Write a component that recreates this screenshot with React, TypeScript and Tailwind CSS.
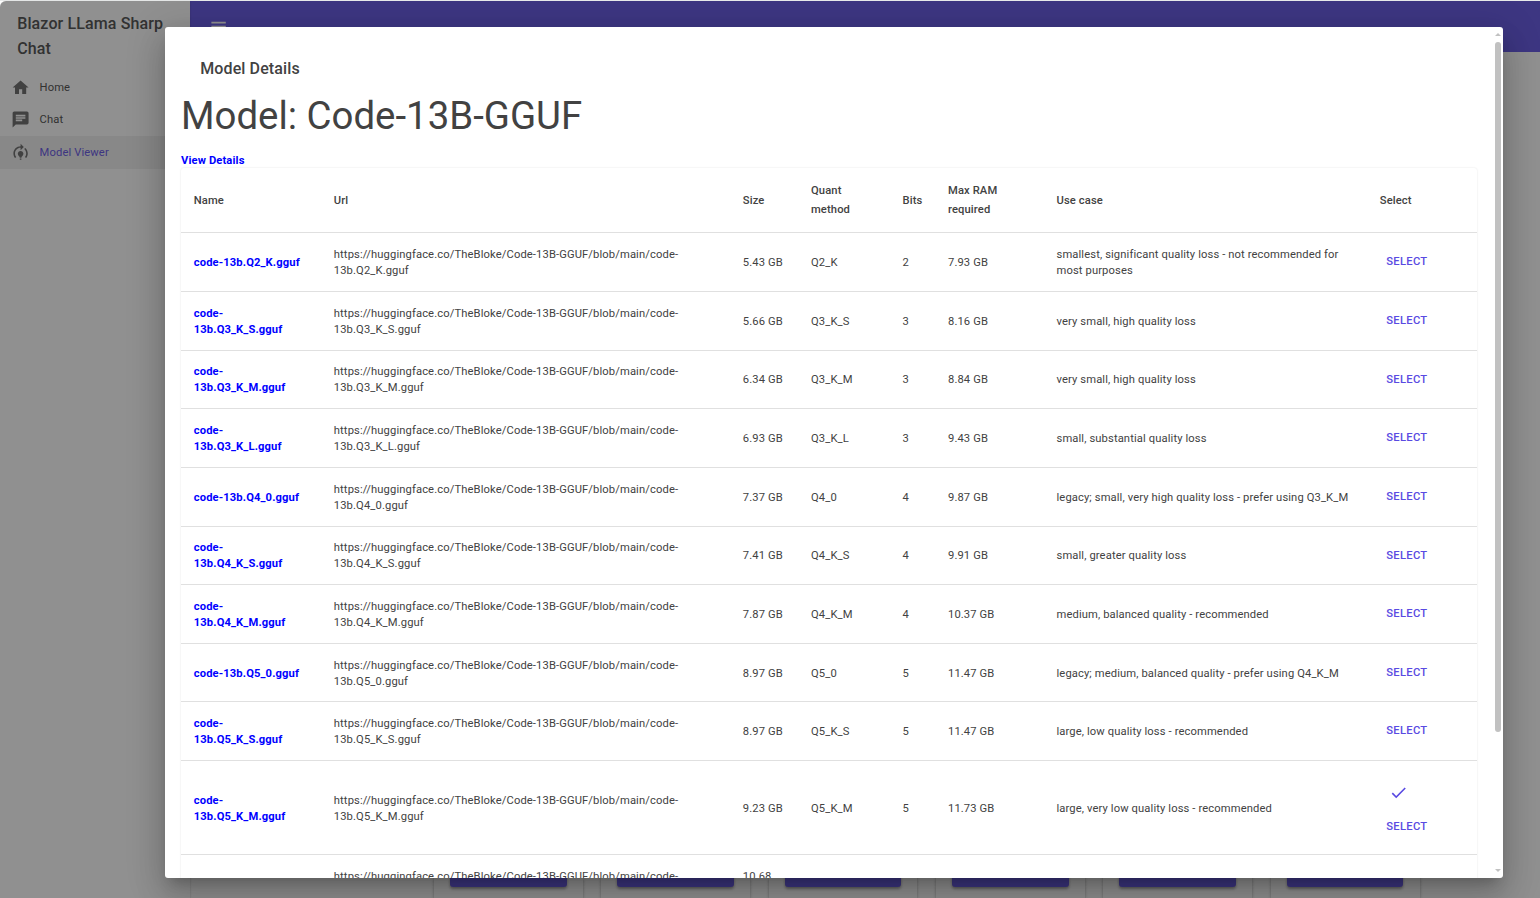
import React from "react";

type Model = {
  file: string;
  size: string;
  quant: string;
  bits: number;
  ram: string;
  useCase: string;
  selected?: boolean;
};

const models: Model[] = [
  { file: "Q2_K", size: "5.43 GB", quant: "Q2_K", bits: 2, ram: "7.93 GB", useCase: "smallest, significant quality loss - not recommended for most purposes" },
  { file: "Q3_K_S", size: "5.66 GB", quant: "Q3_K_S", bits: 3, ram: "8.16 GB", useCase: "very small, high quality loss" },
  { file: "Q3_K_M", size: "6.34 GB", quant: "Q3_K_M", bits: 3, ram: "8.84 GB", useCase: "very small, high quality loss" },
  { file: "Q3_K_L", size: "6.93 GB", quant: "Q3_K_L", bits: 3, ram: "9.43 GB", useCase: "small, substantial quality loss" },
  { file: "Q4_0", size: "7.37 GB", quant: "Q4_0", bits: 4, ram: "9.87 GB", useCase: "legacy; small, very high quality loss - prefer using Q3_K_M" },
  { file: "Q4_K_S", size: "7.41 GB", quant: "Q4_K_S", bits: 4, ram: "9.91 GB", useCase: "small, greater quality loss" },
  { file: "Q4_K_M", size: "7.87 GB", quant: "Q4_K_M", bits: 4, ram: "10.37 GB", useCase: "medium, balanced quality - recommended" },
  { file: "Q5_0", size: "8.97 GB", quant: "Q5_0", bits: 5, ram: "11.47 GB", useCase: "legacy; medium, balanced quality - prefer using Q4_K_M" },
  { file: "Q5_K_S", size: "8.97 GB", quant: "Q5_K_S", bits: 5, ram: "11.47 GB", useCase: "large, low quality loss - recommended" },
  { file: "Q5_K_M", size: "9.23 GB", quant: "Q5_K_M", bits: 5, ram: "11.73 GB", useCase: "large, very low quality loss - recommended", selected: true },
  { file: "Q6_K", size: "10.68 GB", quant: "Q6_K", bits: 6, ram: "13.18 GB", useCase: "very large, extremely low quality loss" },
];

const columns =
  "grid grid-cols-[140px_409px_68.2px_91.5px_45.5px_108.5px_323.3px_1fr] items-center border-b border-[#e0e0e0]";

function Icon({ d, className }: { d: string; className: string }) {
  return (
    <svg viewBox="0 0 24 24" className={className} fill="currentColor">
      <path d={d} />
    </svg>
  );
}

const icons = {
  home: "M10 20v-6h4v6h5v-8h3L12 3 2 12h3v8z",
  chat: "M20 2H4c-1.1 0-1.99.9-1.99 2L2 22l4-4h14c1.1 0 2-.9 2-2V4c0-1.1-.9-2-2-2zM6 9h12v2H6V9zm8 5H6v-2h8v2zm4-6H6V6h12v2z",
  training:
    "M15.5 13.5c0 2-2.5 3.5-2.5 5h-2c0-1.5-2.5-3-2.5-5 0-1.93 1.57-3.5 3.5-3.5s3.5 1.57 3.5 3.5zm-2.5 6h-2V21h2v-1.5zm6-6.5c0 1.68-.59 3.21-1.58 4.42l1.42 1.42C20.18 17.27 21 15.23 21 13c0-2.74-1.23-5.19-3.16-6.84l-1.42 1.42C17.99 8.86 19 10.82 19 13zm-3-8l-4-4v3c-4.97 0-9 4.03-9 9 0 2.23.82 4.27 2.16 5.84l1.42-1.42C5.59 16.21 5 14.68 5 13c0-3.86 3.14-7 7-7v3l4-4z",
  menu: "M3 18h18v-2H3v2zm0-5h18v-2H3v2zm0-7v2h18V6H3z",
  check: "M9 16.17L4.83 12l-1.42 1.41L9 19 21 7l-1.41-1.41z",
};

function NavItem({ icon, label, active }: { icon: string; label: string; active?: boolean }) {
  return (
    <div className={`flex h-[32.5px] items-center pl-[10.8px] ${active ? "bg-[#eeeeee] text-[#594ae2]" : "text-[#424242]"}`}>
      <Icon d={icon} className="-mt-px size-[19.2px] text-[#616161]" />
      <span className="ml-[9.6px]">{label}</span>
    </div>
  );
}

function Page() {
  return (
    <div className="flex h-full">
      <aside className="z-10 w-[190px] shrink-0 rounded-tl-[6px] bg-white shadow-[0_1px_2px_rgba(0,0,0,0.3)]">
        <div className="px-[17.2px] pt-[9.5px] pb-[9.8px] text-[16px] leading-[25.6px] font-medium tracking-[0.0075em] text-[#424242]">
          Blazor LLama Sharp Chat
        </div>
        <nav>
          <NavItem icon={icons.home} label="Home" />
          <NavItem icon={icons.chat} label="Chat" />
          <NavItem icon={icons.training} label="Model Viewer" active />
        </nav>
      </aside>
      <main className="flex min-w-0 flex-1 flex-col justify-between">
        <header className="flex h-[51px] items-center bg-[#594ae2] pl-[18.6px] text-white">
          <Icon d={icons.menu} className="size-[19.2px]" />
        </header>
        <div className="flex h-[40px] gap-[18.6px] pl-[243.8px]">
          {[0, 1, 2, 3, 4, 5].map((i) => (
            <div key={i} className="w-[148.8px] shrink-0 bg-white px-[16.1px] shadow-[0_1px_3px_rgba(0,0,0,0.35)]">
              <div className="h-[29px] rounded-[3px] bg-[#594ae2] shadow-[0_2px_3px_rgba(0,0,0,0.4)]" />
            </div>
          ))}
        </div>
      </main>
    </div>
  );
}

function SelectButton() {
  return (
    <button className="block px-[6.4px] font-medium tracking-[0.02857em] text-[#594ae2] uppercase">Select</button>
  );
}

function ModelRow({ model }: { model: Model }) {
  return (
    <div className={`${columns} ${model.selected ? "h-[93.8px] pt-[3px]" : "h-[58.65px] pt-[2px]"} *:px-[12.8px]`}>
      <a className="font-bold text-[#0000ff]">code-13b.{model.file}.gguf</a>
      <span>https://huggingface.co/TheBloke/Code-13B-GGUF/blob/main/code-13b.{model.file}.gguf</span>
      <span>{model.size}</span>
      <span>{model.quant}</span>
      <span>{model.bits}</span>
      <span>{model.ram}</span>
      <span>{model.useCase}</span>
      <div className={model.selected ? "-mt-[3px]" : "-mt-[1.7px]"}>
        {model.selected && (
          <div className="mb-[17px] pt-[3px] pl-[9.5px]">
            <Icon d={icons.check} className="size-[19.2px] text-[#594ae2]" />
          </div>
        )}
        <SelectButton />
      </div>
    </div>
  );
}

function Scrollbar() {
  return (
    <div className="flex w-[10px] shrink-0 flex-col items-center justify-between py-[6px]">
      <div className="flex flex-col items-center">
        <svg width="6" height="3" className="text-[#c1c1c1]" fill="currentColor">
          <path d="M3 0 6 3H0z" />
        </svg>
        <div className="mt-[6px] h-[690px] w-[6px] rounded-[3px] bg-[#c1c1c1]" />
      </div>
      <svg width="6" height="3" className="text-[#c1c1c1]" fill="currentColor">
        <path d="M0 0h6L3 3z" />
      </svg>
    </div>
  );
}

function ModelDialog() {
  return (
    <div className="flex h-[851px] w-[1338px] overflow-hidden rounded-[3px] bg-white shadow-[0_9px_12px_-6px_rgba(0,0,0,0.2),0_19px_30px_2px_rgba(0,0,0,0.14),0_7px_37px_6px_rgba(0,0,0,0.12)]">
      <div className="min-w-0 flex-1 pt-[29px] pl-[16px]">
        <h6 className="pl-[19.2px] text-[16px] leading-[25.6px] font-medium tracking-[0.0075em]">Model Details</h6>
        <h3 className="mt-[12px] text-[38.4px] leading-[44.8px] tracking-normal">Model: Code-13B-GGUF</h3>
        <a className="mt-[14.5px] -mb-[1.2px] block font-bold text-[#0000ff]">View Details</a>
        <div className="w-[1296px] rounded-[3px] pt-px shadow-[0_0_2px_rgba(0,0,0,0.12)]">
          <div className={`${columns} h-[64.61px] pb-[0.3px] leading-[19px] font-medium *:px-[12.8px]`}>
            <span>Name</span>
            <span>Url</span>
            <span>Size</span>
            <span>Quant method</span>
            <span>Bits</span>
            <span>Max RAM required</span>
            <span>Use case</span>
            <span>Select</span>
          </div>
          {models.map((m) => (
            <ModelRow key={m.file} model={m} />
          ))}
        </div>
      </div>
      <Scrollbar />
    </div>
  );
}

export default function App() {
  return (
    <div className="relative h-[898px] w-[1540px] overflow-hidden bg-[#e8eaea] pt-px font-['Roboto',sans-serif] text-[11.2px] leading-[16.02px] tracking-[0.01071em] text-[#424242]">
      <div className="h-full bg-white">
        <Page />
      </div>
      <div className="absolute inset-x-0 top-px bottom-0 z-20 rounded-tl-[6px] bg-[rgba(33,33,33,0.5)] pt-[26px] pl-[165px]">
        <ModelDialog />
      </div>
    </div>
  );
}
